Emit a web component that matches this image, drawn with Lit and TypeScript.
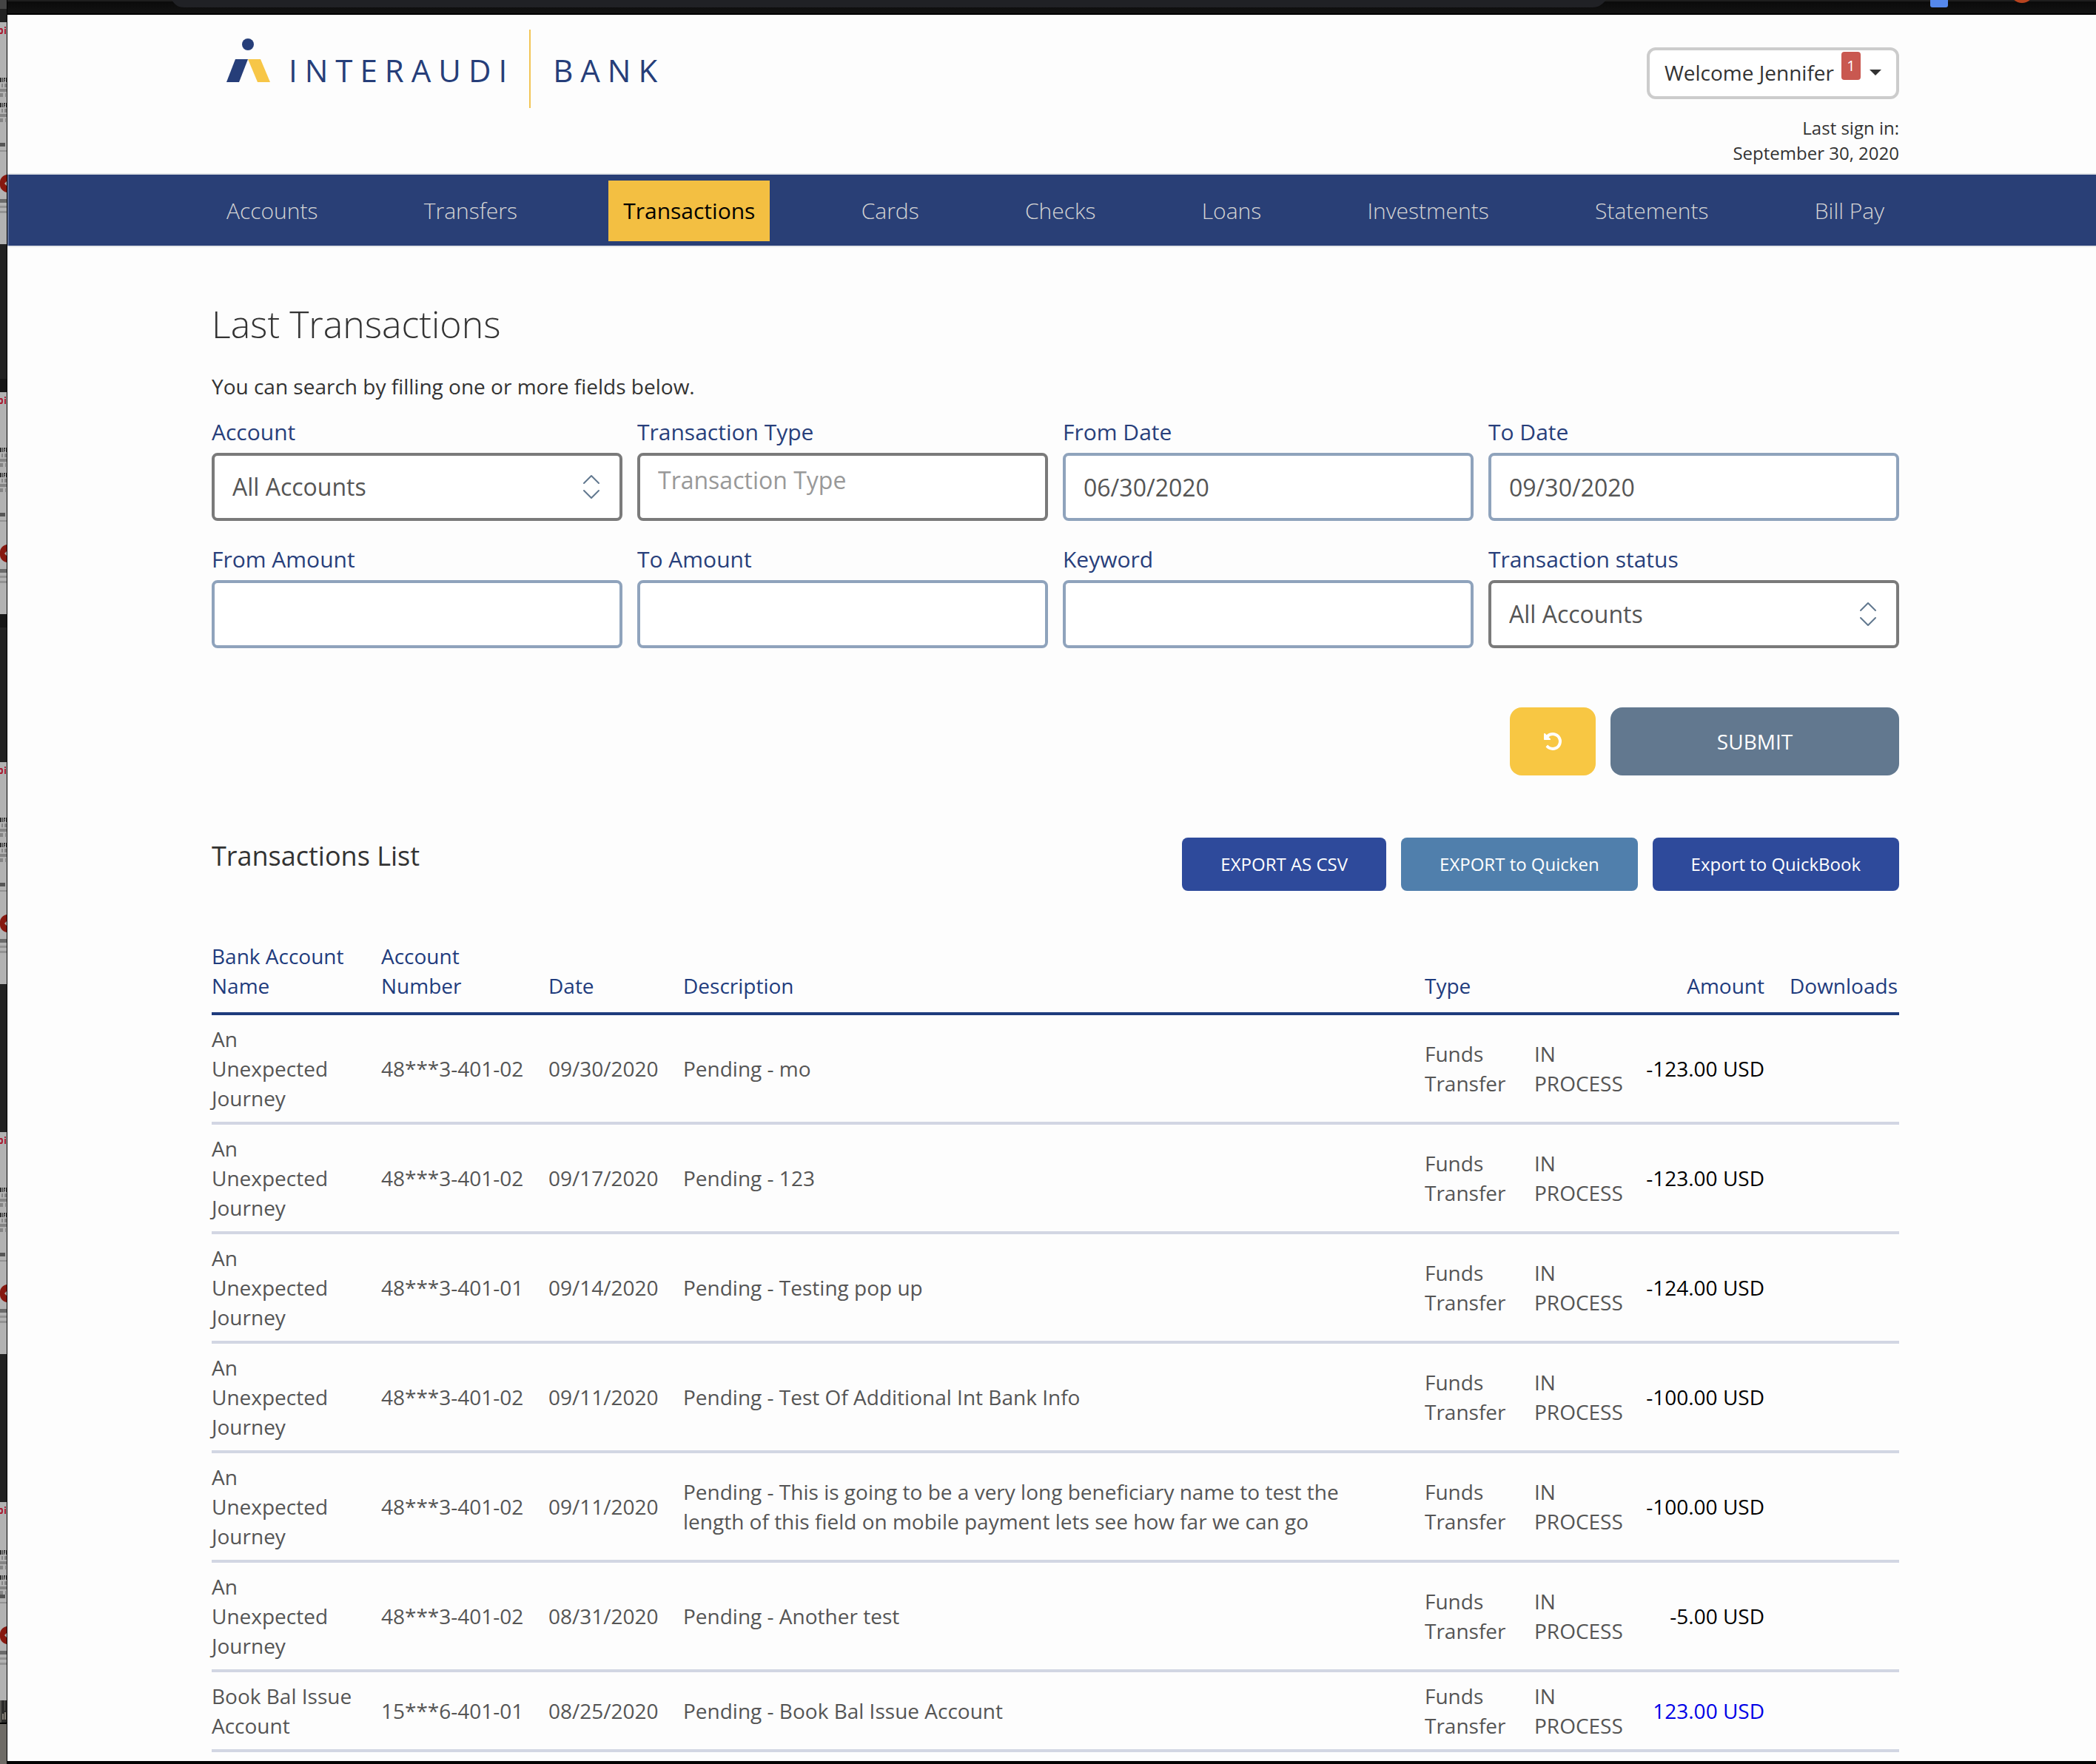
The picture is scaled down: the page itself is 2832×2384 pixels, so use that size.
import { LitElement, html, css, svg } from "lit";
import { customElement } from "lit/decorators.js";
import { classMap } from "lit/directives/class-map.js";

interface Transaction {
  name: string;
  account: string;
  date: string;
  description: string;
  amount: string;
  credit?: boolean;
}

const NAV = ["Accounts", "Transfers", "Transactions", "Cards", "Checks", "Loans", "Investments", "Statements", "Bill Pay"];

const JOURNEY = "An Unexpected Journey";

const ROWS: Transaction[] = [
  { name: JOURNEY, account: "48***3-401-02", date: "09/30/2020", description: "Pending - mo", amount: "-123.00 USD" },
  { name: JOURNEY, account: "48***3-401-02", date: "09/17/2020", description: "Pending - 123", amount: "-123.00 USD" },
  { name: JOURNEY, account: "48***3-401-01", date: "09/14/2020", description: "Pending - Testing pop up", amount: "-124.00 USD" },
  { name: JOURNEY, account: "48***3-401-02", date: "09/11/2020", description: "Pending - Test Of Additional Int Bank Info", amount: "-100.00 USD" },
  { name: JOURNEY, account: "48***3-401-02", date: "09/11/2020", description: "Pending - This is going to be a very long beneficiary name to test the length of this field on mobile payment lets see how far we can go", amount: "-100.00 USD" },
  { name: JOURNEY, account: "48***3-401-02", date: "08/31/2020", description: "Pending - Another test", amount: "-5.00 USD" },
  { name: "Book Bal Issue Account", account: "15***6-401-01", date: "08/25/2020", description: "Pending - Book Bal Issue Account", amount: "123.00 USD", credit: true },
];

/* Slice of the window that sits behind the browser. */
@customElement("desktop-edge")
export class DesktopEdge extends LitElement {
  static styles = css`
    :host { display: block; background: #000; overflow: hidden; }
    svg { display: block; width: 10px; height: 2384px; }
  `;

  /* One sheet: red heading, two address blocks, and a footer block with a round red mark. */
  private sheet(top: number, blocks: number, footer: number) {
    return svg`
      <g transform="translate(0 ${top})">
        <rect width="9" height="300" fill="#b2b2b2"></rect>
        <path d="M0 8h2q2 0 2 4t-2 4H0v-2h1q1 0 1-2t-1-2H0zM6 9h2v7H6zM6 6h2v2H6z" fill="#ab1c33"></path>
        <g transform="translate(0 ${blocks})">
          <path d="M0 0h2v6H0zM3 0h1v6H3zM5 0h2v2H6v1h1v1H6v2H5zM8 0h1v6H8zM0 34h2v6H0zM3 34h1v6H3zM5 34h2v2H6v1h1v1H6v2H5zM8 34h1v6H8z" fill="#333"></path>
          <path d="M2 8h2v5H2zM6 8h3v5H6zM0 15h9v4H0zM0 21h4v5H0zM7 21h1v5H7zM2 42h2v5H2zM6 42h3v5H6zM0 49h9v4H0zM0 55h4v5H0zM7 55h1v5H7z" fill="#858585"></path>
        </g>
        <g transform="translate(0 ${footer})">
          <path d="M0 0h7v5H0z" fill="#555"></path>
          <path d="M0 10h9v2H0zM0 85h9v3H0zM0 92h9v3H0z" fill="#929292"></path>
          <path d="M9 43C4 44 0 48 0 53v4C0 62 4 66 9 67V58L6 55l3-3z" fill="#86180f"></path>
          <path d="M0 76h9v5H0z" fill="#6a6a6a"></path>
        </g>
      </g>`;
  }

  render() {
    return html`<svg viewBox="0 0 10 2384" aria-hidden="true">
      <rect width="9" height="2384" fill="#222"></rect>
      <rect width="9" height="12" fill="#444"></rect>
      <path d="M0 512h9v18H0zM0 830h9v18H0z" fill="#161616"></path>
      ${[30, 530, 1030, 1530].map((y) => this.sheet(y, 75, 163))}
      ${this.sheet(2030, 65, 125)}
      <rect y="2298" width="9" height="30" fill="#2c2c2a"></rect>
      <path d="M0 2298h2v30H0zM6 2298h1v14H6z" fill="#55544f"></path>
      <path d="M3 2316h2v8H3zM6 2314h2v10H6z" fill="#8b857c"></path>
      <rect y="2328" width="9" height="2" fill="#000"></rect>
      <rect y="2330" width="9" height="54" fill="#6e6b66"></rect>
    </svg>`;
  }
}

@customElement("bank-logo")
export class BankLogo extends LitElement {
  static styles = css`
    :host { display: flex; align-items: flex-start; color: #263e79; }
    svg { display: block; width: 60px; height: 62px; margin-top: 10px; }
    .word { font-size: 42px; line-height: 58px; letter-spacing: 10px; margin-top: 26px; }
    .first { margin-left: 24px; }
    .rule { width: 2px; height: 106px; background: #f3c555; margin: 0 30px 0 20px; }
  `;

  render() {
    return html`
      <svg viewBox="0 0 60 62" aria-hidden="true">
        <circle cx="29" cy="10" r="8" fill="#263e79"></circle>
        <path d="M12 30h17L17 61H0z" fill="#263e79"></path>
        <path d="M29 30h17l13 31H42z" fill="#f7c647"></path>
      </svg>
      <span class="word first">INTERAUDI</span>
      <span class="rule"></span>
      <span class="word">BANK</span>
    `;
  }
}

@customElement("app-root")
export class AppRoot extends LitElement {
  static styles = css`
    :host {
      display: grid;
      grid-template-columns: 10px 1fr;
      min-height: 100vh;
      background: #fdfdfd;
      color: #333;
      font-family: "Open Sans", sans-serif;
      font-size: 28px;
      line-height: 40px;
    }
    * { box-sizing: border-box; }
    .window { display: flex; flex-direction: column; min-width: 0; }
    .chrome {
      position: relative;
      height: 20px;
      background: linear-gradient(#1e1e1e 2px, #0a0a0a 2px, #131313 18px, #000 18px);
    }
    .chrome svg { position: absolute; inset: 0; width: 100%; height: 20px; }
    .container { width: calc(100% - 20px); max-width: 2280px; margin: 0 auto; }
    .offset { padding-left: 10px; }

    .header { display: flex; justify-content: space-between; height: 214px; padding: 20px 0 0 20px; }
    .user { display: flex; flex-direction: column; align-items: flex-end; padding-top: 24px; }
    .welcome {
      display: flex;
      align-items: flex-start;
      height: 70px;
      padding: 10px 20px;
      border: 4px solid #ccc;
      border-radius: 12px;
      background: #fff;
      color: #333;
      font: inherit;
    }
    .badge {
      margin: -8px 12px 0 10px;
      width: 26px;
      height: 38px;
      border-radius: 4px;
      background: #c95850;
      color: #fff;
      font-size: 20px;
      line-height: 38px;
      text-align: center;
    }
    .caret { width: 16px; height: 8px; margin-top: 16px; }
    .signin { margin: 22px 0 0; font-size: 24px; line-height: 34px; text-align: right; }

    .nav {
      background: #293f76;
      border-top: 2px solid #e4e6e9;
      border-bottom: 2px solid #e4e6e9;
      box-shadow: inset 2px 0 #5c6e9a;
    }
    .nav ul { display: flex; justify-content: space-between; list-style: none; padding: 8px 0 6px; }
    .nav a {
      display: block;
      padding: 20px;
      font-size: 30px;
      line-height: 42px;
      font-weight: 300;
      color: #d4d4d4;
      text-decoration: none;
    }
    .nav a.active { background: #f3bf42; color: #000; font-weight: 400; }

    h1 { margin: 68px 0 0; font-size: 50px; line-height: 72px; font-weight: 300; }
    .intro { margin: 28px 0 0; }
    .filters { display: grid; grid-template-columns: repeat(4, 1fr); gap: 32px 20px; margin-top: 22px; }
    .field { display: flex; flex-direction: column; position: relative; }
    .field label { font-size: 30px; line-height: 40px; margin-bottom: 8px; color: #283f7b; }
    .field input, .field select {
      width: 100%;
      height: 92px;
      padding: 0 24px;
      border: 4px solid #8fa3bc;
      border-radius: 8px;
      background: #fff;
      color: #555;
      font: inherit;
      font-size: 32px;
      appearance: none;
    }
    .field select, .field .type { border-color: #7a7a7a; }
    .field .type { padding-bottom: 20px; }
    .field input::placeholder { color: #999; opacity: 1; }
    .field .chevrons { position: absolute; right: 30px; bottom: 28px; width: 24px; height: 36px; pointer-events: none; }
    .actions { display: flex; justify-content: flex-end; gap: 20px; margin-top: 80px; }
    .actions button { height: 92px; border: 0; border-radius: 16px; color: #fff; font: inherit; }
    .reset { width: 116px; background: #f8c743; display: flex; align-items: center; justify-content: center; }
    .reset svg { width: 28px; height: 28px; }
    .submit { width: 390px; background: #62788f; }

    .list-head { display: flex; justify-content: space-between; align-items: flex-start; margin-top: 84px; }
    h2 { margin: 0; font-size: 36px; line-height: 50px; font-weight: 400; }
    .exports { display: flex; gap: 20px; }
    .exports button {
      height: 72px;
      padding: 0 52px;
      border: 0;
      border-radius: 8px;
      background: #2e4a9b;
      color: #fff;
      font: inherit;
      font-size: 24px;
    }
    .exports .quicken { background: #507fac; }

    table { width: 100%; margin-top: 56px; table-layout: fixed; border-collapse: separate; border-spacing: 0; }
    .c-name { width: 229px; }
    .c-account { width: 226px; }
    .c-date { width: 182px; }
    .c-type { width: 148px; }
    .c-status { width: 151px; }
    .c-amount { width: 194px; }
    .c-down { width: 148px; }
    th, td { text-align: left; font-weight: 400; padding: 12px 34px 12px 0; }
    th { vertical-align: bottom; color: #1f3c7d; border-bottom: 4px solid #1f3c7d; padding-bottom: 16px; }
    td { vertical-align: middle; color: #555; border-bottom: 4px solid #d2d6e3; }
    .nowrap { white-space: nowrap; }
    .status { padding-right: 0; }
    .amount { text-align: right; white-space: nowrap; }
    td.amount { color: #000; }
    td.credit { color: #0000e6; }
    .downloads { padding-right: 0; }
    .end { margin-top: auto; height: 4px; background: #000; }
  `;

  private chevrons() {
    return html`<svg class="chevrons" viewBox="0 0 24 36" fill="none" stroke="#62788f" stroke-width="2" stroke-linecap="round" stroke-linejoin="round" aria-hidden="true">
      <path d="M2 13L12 3l10 10M2 23l10 10 10-10"></path>
    </svg>`;
  }

  private input(id: string, label: string, value = "") {
    return html`<div class="field"><label for=${id}>${label}</label><input id=${id} type="text" .value=${value} /></div>`;
  }

  private select(id: string, label: string) {
    return html`<div class="field">
      <label for=${id}>${label}</label>
      <select id=${id}><option>All Accounts</option></select>
      ${this.chevrons()}
    </div>`;
  }

  render() {
    return html`
      <desktop-edge></desktop-edge>
      <div class="window">
        <div class="chrome">
          <svg aria-hidden="true">
            <path d="M222 0c4 6 8 10 16 10H2142c8 0 13-4 18-10z" fill="#202125"></path>
            <rect x="2598" y="-4" width="24" height="14" rx="3" fill="#5588ec"></rect>
            <circle cx="2722" cy="-12" r="16" fill="#b8431f"></circle>
          </svg>
        </div>
        <div class="offset">
          <header class="container header">
            <bank-logo></bank-logo>
            <div class="user">
              <button class="welcome" type="button">
                Welcome Jennifer<span class="badge">1</span>
                <svg class="caret" viewBox="0 0 16 8" aria-hidden="true"><path d="M0 0h16L8 8z" fill="#333"></path></svg>
              </button>
              <p class="signin">Last sign in:<br />September 30, 2020</p>
            </div>
          </header>
        </div>
        <nav class="nav offset">
          <ul class="container">
            ${NAV.map((n) => html`<li><a href="#" class=${classMap({ active: n === "Transactions" })}>${n}</a></li>`)}
          </ul>
        </nav>
        <main class="offset">
          <div class="container">
            <h1>Last Transactions</h1>
            <p class="intro">You can search by filling one or more fields below.</p>
            <form @submit=${(e: Event) => e.preventDefault()}>
              <div class="filters">
                ${this.select("account", "Account")}
                <div class="field">
                  <label for="type">Transaction Type</label>
                  <input id="type" class="type" type="text" placeholder="Transaction Type" />
                </div>
                ${this.input("from-date", "From Date", "06/30/2020")}
                ${this.input("to-date", "To Date", "09/30/2020")}
                ${this.input("from-amount", "From Amount")}
                ${this.input("to-amount", "To Amount")}
                ${this.input("keyword", "Keyword")}
                ${this.select("status", "Transaction status")}
              </div>
              <div class="actions">
                <button class="reset" type="reset" aria-label="Reset">
                  <svg viewBox="0 0 1792 1792" fill="#fff" aria-hidden="true">
                    <path d="M1664 896q0 156-61 298t-164 245-245 164-298 61q-172 0-327-72.5t-264-204.5q-7-10-6.5-22.5t8.5-20.5l137-138q10-9 25-9 16 2 23 12 73 95 179 147t225 52q104 0 198.5-40.5t163.5-109.5 109.5-163.5 40.5-198.5-40.5-198.5-109.5-163.5-163.5-109.5-198.5-40.5q-98 0-188 35.5t-160 101.5l137 138q31 30 14 69-17 40-59 40h-448q-26 0-45-19t-19-45v-448q0-42 40-59 39-17 69 14l130 129q107-101 244.5-156.5t284.5-55.5q156 0 298 61t245 164 164 245 61 298z"></path>
                  </svg>
                </button>
                <button class="submit" type="submit">SUBMIT</button>
              </div>
            </form>
            <div class="list-head">
              <h2>Transactions List</h2>
              <div class="exports">
                <button type="button">EXPORT AS CSV</button>
                <button type="button" class="quicken">EXPORT to Quicken</button>
                <button type="button">Export to QuickBook</button>
              </div>
            </div>
            <table>
              <colgroup>
                <col class="c-name" /><col class="c-account" /><col class="c-date" /><col />
                <col class="c-type" /><col class="c-status" /><col class="c-amount" /><col class="c-down" />
              </colgroup>
              <thead>
                <tr>
                  <th>Bank Account Name</th><th>Account Number</th><th>Date</th><th>Description</th>
                  <th>Type</th><th></th><th class="amount">Amount</th><th class="downloads">Downloads</th>
                </tr>
              </thead>
              <tbody>
                ${ROWS.map((r) => html`<tr>
                  <td>${r.name}</td>
                  <td class="nowrap">${r.account}</td>
                  <td class="nowrap">${r.date}</td>
                  <td>${r.description}</td>
                  <td>Funds Transfer</td>
                  <td class="status">IN<br />PROCESS</td>
                  <td class=${classMap({ amount: true, credit: !!r.credit })}>${r.amount}</td>
                  <td class="downloads"></td>
                </tr>`)}
              </tbody>
            </table>
          </div>
        </main>
        <div class="end"></div>
      </div>
    `;
  }
}
